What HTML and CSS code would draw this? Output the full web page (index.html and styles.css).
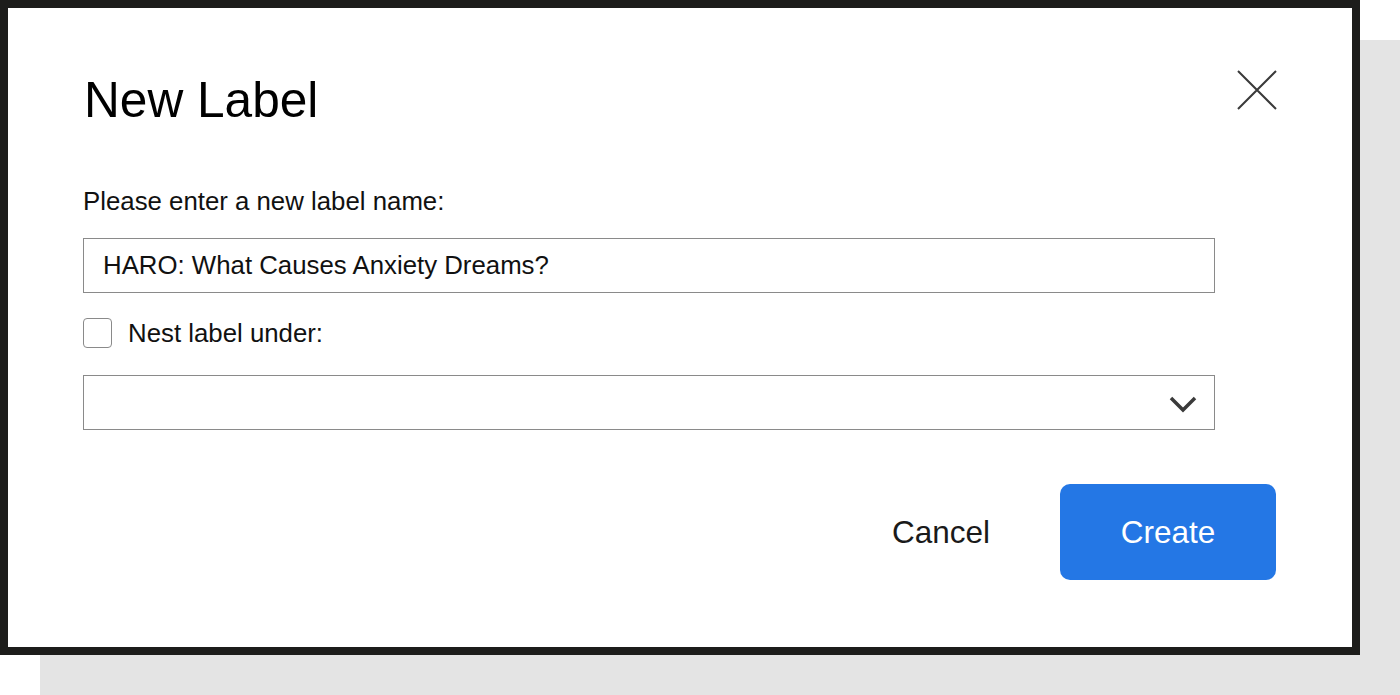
FILE: index.html
```html
<!DOCTYPE html>
<html lang="en">
<head>
    <meta charset="UTF-8">
    <meta name="viewport" content="width=device-width, initial-scale=1.0">
    <title>New Label</title>
    <link rel="stylesheet" href="styles.css">
</head>
<body>
    <div class="page">
        <div class="dialog">
            <div class="dialog-header">
                <h1>New Label</h1>
                <button class="close-button" aria-label="Close">
                    <svg width="40" height="40" viewBox="0 0 40 40">
                        <path d="M1 1 L39 39 M39 1 L1 39" stroke="#3a3a3a" stroke-width="2" fill="none"/>
                    </svg>
                </button>
            </div>
            <label class="field-label" for="labelName">Please enter a new label name:</label>
            <input class="text-input" type="text" id="labelName" value="HARO: What Causes Anxiety Dreams?">
            <div class="nest-row">
                <input class="checkbox" type="checkbox" id="nestCheck">
                <label for="nestCheck">Nest label under:</label>
            </div>
            <div class="select-box">
                <span class="select-value"></span>
                <svg width="28" height="18" viewBox="0 0 28 18">
                    <path d="M2 3 L14 15 L26 3" stroke="#3a3a3a" stroke-width="3.5" fill="none"/>
                </svg>
            </div>
            <div class="dialog-footer">
                <button class="cancel-button">Cancel</button>
                <button class="create-button">Create</button>
            </div>
        </div>
    </div>
</body>
</html>
```

FILE: styles.css
```css
body {
    margin: 0;
    background: #fff;
    font-family: "Liberation Sans", Arial, sans-serif;
}
.page {
    min-height: 695px;
    padding-bottom: 40px;
    box-sizing: border-box;
}
.dialog {
    box-sizing: border-box;
    width: 1360px;
    height: 655px;
    border: 8px solid #1d1d1b;
    background: #fff;
    box-shadow: 40px 40px 0 #e4e4e4;
    padding: 66px 76px 0 75px;
    display: flex;
    flex-direction: column;
}
.dialog-header {
    display: flex;
    justify-content: space-between;
    align-items: flex-start;
}
.dialog-header h1 {
    margin: 0 0 0 1px;
    font-size: 49.6px;
    font-weight: normal;
    line-height: 52px;
    color: #000;
}
.close-button {
    border: none;
    background: none;
    padding: 0;
    margin: -4px -1px 0 0;
    width: 40px;
    height: 40px;
    cursor: pointer;
}
.close-button svg {
    display: block;
}
.field-label {
    margin-top: 60px;
    font-size: 25.8px;
    line-height: 30px;
    color: #111;
}
.text-input {
    box-sizing: border-box;
    width: 1132px;
    height: 55px;
    margin: 22px 0 0 0;
    padding: 0 19px;
    border: 1px solid #8a8a8a;
    border-radius: 0;
    font-family: inherit;
    font-size: 25.8px;
    color: #111;
    outline: none;
}
.nest-row {
    margin-top: 25px;
    display: flex;
    align-items: center;
    gap: 16px;
    height: 30px;
    font-size: 25.8px;
    color: #111;
}
.checkbox {
    appearance: none;
    -webkit-appearance: none;
    box-sizing: border-box;
    width: 29px;
    height: 30px;
    margin: 0;
    border: 1px solid #8a8a8a;
    border-radius: 4px;
    background: #fff;
}
.select-box {
    box-sizing: border-box;
    width: 1132px;
    height: 55px;
    margin-top: 27px;
    padding: 0 17px 0 18px;
    border: 1px solid #8a8a8a;
    display: flex;
    align-items: center;
    justify-content: space-between;
}
.select-box svg {
    display: block;
    margin-top: 3px;
}
.dialog-footer {
    margin-top: 54px;
    display: flex;
    justify-content: flex-end;
    align-items: center;
    gap: 70px;
}
.cancel-button {
    border: none;
    background: none;
    padding: 0;
    font-family: inherit;
    font-size: 31.5px;
    color: #1a1a1a;
    cursor: pointer;
}
.create-button {
    width: 216px;
    height: 96px;
    border: none;
    border-radius: 10px;
    background: #2477e5;
    color: #fff;
    font-family: inherit;
    font-size: 31.5px;
    cursor: pointer;
}
```
